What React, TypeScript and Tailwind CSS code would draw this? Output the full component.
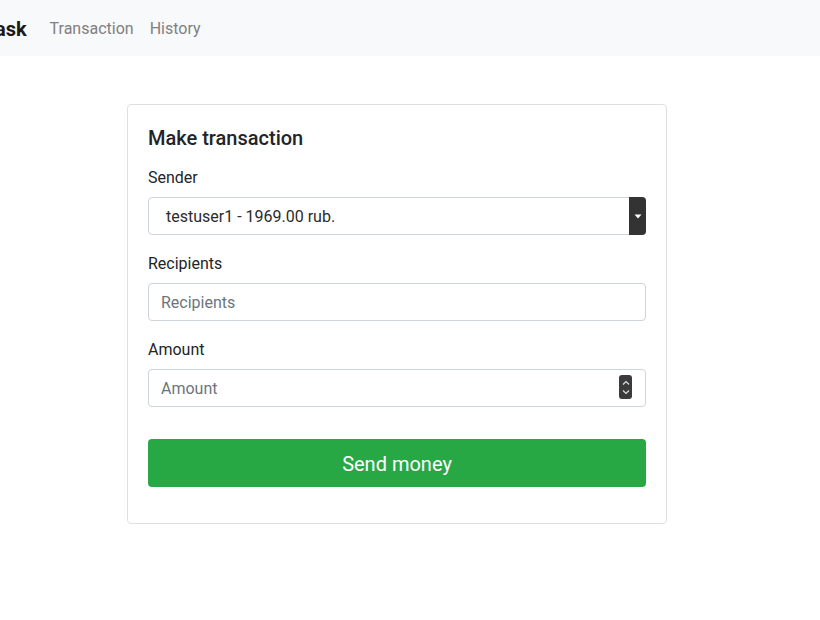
import React from "react"

const font = { fontFamily: "Roboto, 'Liberation Sans', sans-serif" }

function Field({ label, children }: { label: string; children: React.ReactNode }) {
	return (
		<div className="mb-4">
			<label className="block mb-2 pt-px h-6 text-base leading-6 text-[#212529]">{label}</label>
			{children}
		</div>
	)
}

export default function App() {
	return (
		<div className="min-h-[620px] bg-white text-[#212529]" style={font}>
			{/* Navbar */}
			<nav className="h-14 bg-[#f8f9fa] flex items-center pt-0.5 overflow-hidden">
				<span className="text-xl font-bold text-[#1a1a1a] -ml-[16px] mr-[23px] whitespace-nowrap">Task</span>
				<a className="text-base text-[#808080] pr-4">Transaction</a>
				<a className="text-base text-[#808080]">History</a>
			</nav>

			{/* Card */}
			<div className="pt-12 pl-[127px]">
				<div className="w-[540px] border border-[#dfdfdf] rounded p-5">
					<h5 className="text-xl font-medium leading-6 h-6 pt-px mb-4">Make transaction</h5>

					<Field label="Sender">
						<div className="relative h-[38px] border border-[#ced4da] rounded flex items-center pl-[17px] pt-0.5 text-base text-[#2b2b2b]">
							testuser1 - 1969.00 rub.
							<div className="absolute -right-px -top-px -bottom-px w-[17px] bg-[#333333] rounded-r flex items-center justify-center">
								<svg width="8" height="5" viewBox="0 0 8 5">
									<path d="M0.5 0.5 L4 4.5 L7.5 0.5 Z" fill="#ffffff" />
								</svg>
							</div>
						</div>
					</Field>

					<Field label="Recipients">
						<div className="h-[38px] border border-[#ced4da] rounded flex items-center px-3 pt-0.5 text-base text-[#6c757d]">
							Recipients
						</div>
					</Field>

					<Field label="Amount">
						<div className="relative h-[38px] border border-[#ced4da] rounded flex items-center px-3 pt-0.5 text-base text-[#6c757d]">
							Amount
							<div className="absolute right-[13px] top-[5px] w-[13px] h-[24px] bg-[#3b3b3b] rounded-[3px] flex flex-col items-center justify-center gap-[5px]">
								<svg width="8" height="5" viewBox="0 0 8 5">
									<path d="M1 4.5 L4 1.5 L7 4.5" fill="none" stroke="#e0e0e0" strokeWidth="1.2" />
								</svg>
								<svg width="8" height="5" viewBox="0 0 8 5">
									<path d="M1 0.5 L4 3.5 L7 0.5" fill="none" stroke="#e0e0e0" strokeWidth="1.2" />
								</svg>
							</div>
						</div>
					</Field>

					<div className="pt-4 mb-4">
						<button className="w-full h-12 bg-[#28a745] text-white text-xl rounded pt-0.5">Send money</button>
					</div>
				</div>
			</div>
		</div>
	)
}
